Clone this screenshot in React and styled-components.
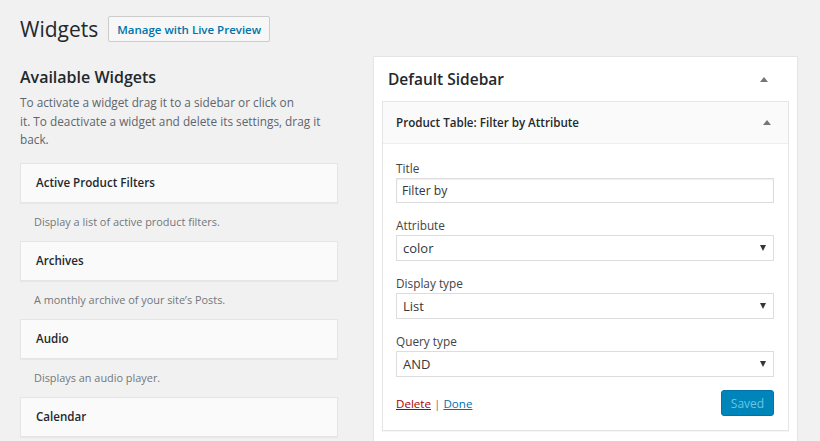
import React from 'react'
import styled, { createGlobalStyle } from 'styled-components'

const GlobalStyle = createGlobalStyle`
  html, body {
    margin: 0;
    padding: 0;
    background: #f1f1f1;
    font-family: "Open Sans", "Noto Sans", sans-serif;
    color: #444;
  }
  * { box-sizing: border-box; }
`

const Page = styled.div`
  padding: 16px 22px 0 20px;
  height: 441px;
  overflow: hidden;
`

const Header = styled.div`
  display: flex;
  align-items: center;
  gap: 10px;
`

const PageTitle = styled.h1`
  margin: 0;
  font-size: 21px;
  font-weight: 400;
  color: #23282d;
  line-height: 26px;
`

const HeaderButton = styled.div`
  height: 26px;
  padding: 0 8px;
  display: flex;
  align-items: center;
  border: 1px solid #ccc;
  background: #f7f7f7;
  border-radius: 2px;
  color: #0073aa;
  font-size: 11.5px;
  font-weight: 600;
`

const Columns = styled.div`
  display: flex;
  gap: 35px;
  margin-top: 14px;
`

const LeftColumn = styled.div`
  width: 318px;
  padding-top: 10px;
`

const SectionTitle = styled.h2`
  margin: 0;
  font-size: 16px;
  font-weight: 600;
  color: #23282d;
  line-height: 22px;
`

const Description = styled.p`
  margin: 5px 0 14px;
  font-size: 11.8px;
  line-height: 18.5px;
  color: #5f656b;
`

const WidgetList = styled.div`
  display: flex;
  flex-direction: column;
`

const WidgetCard = styled.div`
  height: 40px;
  display: flex;
  align-items: center;
  padding: 0 15px;
  background: #fafafa;
  border: 1px solid #e5e5e5;
  box-shadow: 0 1px 1px rgba(0, 0, 0, 0.04);
  font-size: 11.6px;
  font-weight: 600;
  color: #23282d;
`

const WidgetDesc = styled.div`
  height: 38px;
  display: flex;
  align-items: center;
  padding: 0 14px;
  font-size: 10.9px;
  color: #72777c;
`

const Sidebar = styled.div`
  width: 425px;
  background: #fff;
  border: 1px solid #e5e5e5;
  box-shadow: 0 1px 1px rgba(0, 0, 0, 0.04);
  padding: 0 8px 20px 8px;
  min-height: 400px;
`

const SidebarHead = styled.div`
  height: 44px;
  display: flex;
  align-items: center;
  justify-content: space-between;
  padding: 0 21px 0 6px;
`

const SidebarTitle = styled.h2`
  margin: 0;
  font-size: 15.5px;
  font-weight: 600;
  color: #23282d;
`

const Arrow = styled.span`
  width: 0;
  height: 0;
  border-left: 4px solid transparent;
  border-right: 4px solid transparent;
  border-bottom: 5px solid #72777c;
`

const Widget = styled.div`
  border: 1px solid #e5e5e5;
  box-shadow: 0 1px 1px rgba(0, 0, 0, 0.04);
`

const WidgetTop = styled.div`
  height: 42px;
  display: flex;
  align-items: center;
  justify-content: space-between;
  padding: 0 17px 0 13px;
  background: #fafafa;
  border-bottom: 1px solid #eee;
`

const WidgetTitle = styled.h3`
  margin: 0;
  font-size: 11.6px;
  font-weight: 600;
  color: #23282d;
`

const WidgetBody = styled.div`
  background: #fff;
  padding: 15px 14px 14px 13px;
`

const Field = styled.div`
  margin-bottom: 13px;
`

const Label = styled.div`
  font-size: 11.8px;
  line-height: 18px;
  color: #444;
  margin-bottom: 1px;
`

const Input = styled.div`
  height: 25px;
  border: 1px solid #ddd;
  box-shadow: inset 0 1px 2px rgba(0, 0, 0, 0.07);
  padding: 0 5px;
  display: flex;
  align-items: center;
  font-size: 12.2px;
  color: #32373c;
`

const Select = styled(Input)`
  height: 26px;
  padding: 0 7px 0 6px;
  justify-content: space-between;
  box-shadow: none;
  font-size: 13px;
`

const SelectArrow = styled.span`
  width: 0;
  height: 0;
  border-left: 3px solid transparent;
  border-right: 3px solid transparent;
  border-top: 6px solid #32373c;
`

const Actions = styled.div`
  display: flex;
  justify-content: space-between;
  align-items: center;
`

const Links = styled.div`
  font-size: 11.6px;
  color: #72777c;
`

const Link = styled.a`
  color: ${(p) => (p.$danger ? '#a00' : '#0073aa')};
  text-decoration: underline;
`

const SaveButton = styled.div`
  height: 26px;
  width: 53px;
  display: flex;
  align-items: center;
  justify-content: center;
  background: #0085ba;
  border: 1px solid #0073aa;
  border-radius: 3px;
  color: #66c6e4;
  font-size: 12px;
`

const widgets = [
  { name: 'Active Product Filters', desc: 'Display a list of active product filters.' },
  { name: 'Archives', desc: "A monthly archive of your site\u2019s Posts." },
  { name: 'Audio', desc: 'Displays an audio player.' },
  { name: 'Calendar', desc: '' },
]

const fields = [
  { label: 'Attribute', value: 'color' },
  { label: 'Display type', value: 'List' },
  { label: 'Query type', value: 'AND' },
]

export default function App() {
  return (
    <>
      <GlobalStyle />
      <Page>
        <Header>
          <PageTitle>Widgets</PageTitle>
          <HeaderButton>Manage with Live Preview</HeaderButton>
        </Header>
        <Columns>
          <LeftColumn>
            <SectionTitle>Available Widgets</SectionTitle>
            <Description>
              To activate a widget drag it to a sidebar or click on
              <br />
              it. To deactivate a widget and delete its settings, drag it
              <br />
              back.
            </Description>
            <WidgetList>
              {widgets.map((w) => (
                <React.Fragment key={w.name}>
                  <WidgetCard>{w.name}</WidgetCard>
                  {w.desc && <WidgetDesc>{w.desc}</WidgetDesc>}
                </React.Fragment>
              ))}
            </WidgetList>
          </LeftColumn>
          <Sidebar>
            <SidebarHead>
              <SidebarTitle>Default Sidebar</SidebarTitle>
              <Arrow />
            </SidebarHead>
            <Widget>
              <WidgetTop>
                <WidgetTitle>Product Table: Filter by Attribute</WidgetTitle>
                <Arrow />
              </WidgetTop>
              <WidgetBody>
                <Field>
                  <Label>Title</Label>
                  <Input>Filter by</Input>
                </Field>
                {fields.map((f) => (
                  <Field key={f.label}>
                    <Label>{f.label}</Label>
                    <Select>
                      {f.value}
                      <SelectArrow />
                    </Select>
                  </Field>
                ))}
                <Actions>
                  <Links>
                    <Link $danger>Delete</Link> | <Link>Done</Link>
                  </Links>
                  <SaveButton>Saved</SaveButton>
                </Actions>
              </WidgetBody>
            </Widget>
          </Sidebar>
        </Columns>
      </Page>
    </>
  )
}
